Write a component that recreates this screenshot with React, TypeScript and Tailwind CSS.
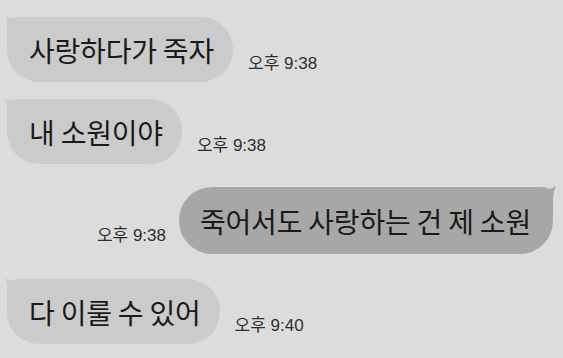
import type { ReactNode } from 'react'

const font = { fontFamily: '"Noto Sans CJK KR", "Noto Sans", sans-serif' }

function Tail({ side, color }: { side: 'left' | 'right'; color: string }) {
  return (
    <svg
      width="16"
      height="22"
      viewBox="0 0 16 22"
      className={side === 'left' ? 'absolute -left-[2px] -top-[1px]' : 'absolute -right-[3px] -top-[1px] -scale-x-100'}
    >
      <path d="M0 0 C5 3 10 4 16 4 L16 22 L4 22 C3 14 3 6 0 0 Z" fill={color} />
    </svg>
  )
}

function Time({ children }: { children: ReactNode }) {
  return (
    <span
      className="block mb-[10px] text-[17px] leading-none text-[#2e2e2e] whitespace-nowrap"
      style={{ fontFamily: '"Liberation Sans", "Noto Sans CJK KR", sans-serif' }}
    >
      {children}
    </span>
  )
}

function Left({ text, time, className }: { text: string; time: string; className: string }) {
  return (
    <div className={cn('flex items-end pl-[7px]', className)}>
      <div className="relative">
        <Tail side="left" color="#cbcbcb" />
        <div className="relative h-[65px] flex items-center rounded-[32px] rounded-tl-[10px] bg-[#cbcbcb] pl-[22px] pr-[19px] text-[28px] tracking-[-0.2px] text-[#1a1a1a] whitespace-nowrap">
          {text}
        </div>
      </div>
      <div className="ml-[15px]">
        <Time>{time}</Time>
      </div>
    </div>
  )
}

function Right({ text, time, className }: { text: string; time: string; className: string }) {
  return (
    <div className={cn('flex items-end justify-end pr-[10px]', className)}>
      <div className="mr-[13px]">
        <Time>{time}</Time>
      </div>
      <div className="relative">
        <Tail side="right" color="#a7a7a7" />
        <div className="relative h-[67px] flex items-center rounded-[33px] rounded-tr-[10px] bg-[#a7a7a7] pl-[21px] pr-[22px] text-[28px] tracking-[-0.2px] text-[#1a1a1a] whitespace-nowrap">
          {text}
        </div>
      </div>
    </div>
  )
}

export default function App() {
  return (
    <div className="w-[563px] h-[358px] overflow-hidden bg-[#dcdcdc] pt-[17px] flex flex-col" style={font}>
      <Left text="사랑하다가 죽자" time="오후 9:38" className="" />
      <Left text="내 소원이야" time="오후 9:38" className="mt-[17px]" />
      <Right text="죽어서도 사랑하는 건 제 소원" time="오후 9:38" className="mt-[23px]" />
      <Left text="다 이룰 수 있어" time="오후 9:40" className="mt-[25px]" />
    </div>
  )
}

function cn(...classes: string[]) {
  return classes.filter(Boolean).join(' ')
}
